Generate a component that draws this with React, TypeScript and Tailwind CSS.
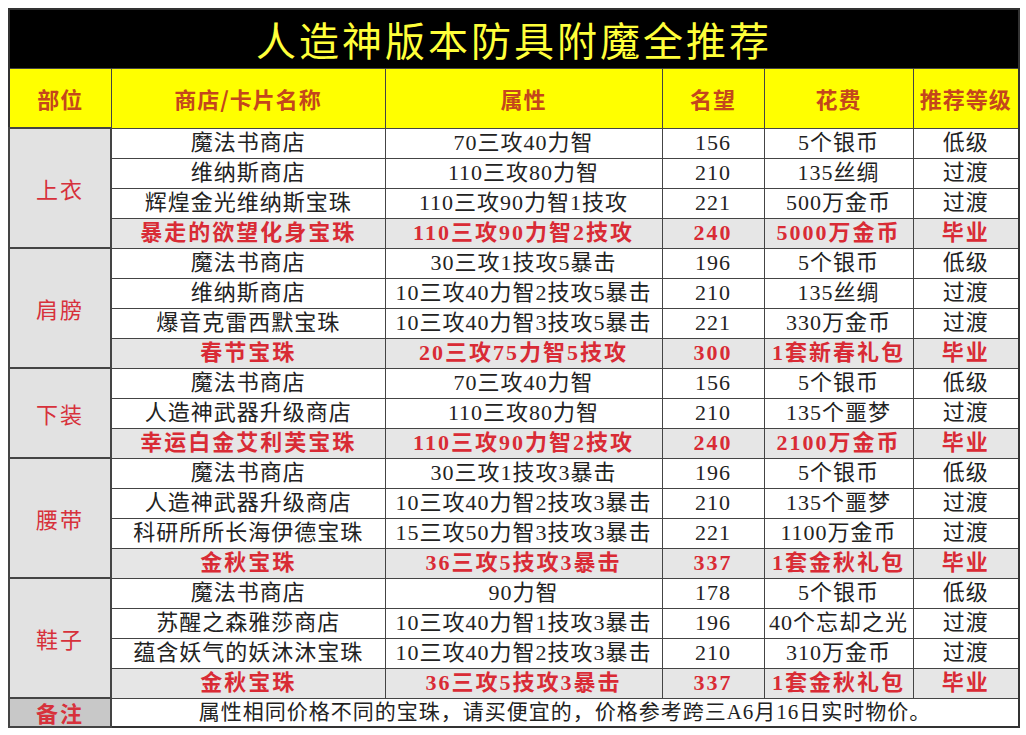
type Row = { name: string; attr: string; fame: string; cost: string; level: string; top?: boolean }

const groups: { part: string; rows: Row[] }[] = [
  {
    part: '上衣',
    rows: [
      { name: '魔法书商店', attr: '70三攻40力智', fame: '156', cost: '5个银币', level: '低级' },
      { name: '维纳斯商店', attr: '110三攻80力智', fame: '210', cost: '135丝绸', level: '过渡' },
      { name: '辉煌金光维纳斯宝珠', attr: '110三攻90力智1技攻', fame: '221', cost: '500万金币', level: '过渡' },
      { name: '暴走的欲望化身宝珠', attr: '110三攻90力智2技攻', fame: '240', cost: '5000万金币', level: '毕业', top: true },
    ],
  },
  {
    part: '肩膀',
    rows: [
      { name: '魔法书商店', attr: '30三攻1技攻5暴击', fame: '196', cost: '5个银币', level: '低级' },
      { name: '维纳斯商店', attr: '10三攻40力智2技攻5暴击', fame: '210', cost: '135丝绸', level: '过渡' },
      { name: '爆音克雷西默宝珠', attr: '10三攻40力智3技攻5暴击', fame: '221', cost: '330万金币', level: '过渡' },
      { name: '春节宝珠', attr: '20三攻75力智5技攻', fame: '300', cost: '1套新春礼包', level: '毕业', top: true },
    ],
  },
  {
    part: '下装',
    rows: [
      { name: '魔法书商店', attr: '70三攻40力智', fame: '156', cost: '5个银币', level: '低级' },
      { name: '人造神武器升级商店', attr: '110三攻80力智', fame: '210', cost: '135个噩梦', level: '过渡' },
      { name: '幸运白金艾利芙宝珠', attr: '110三攻90力智2技攻', fame: '240', cost: '2100万金币', level: '毕业', top: true },
    ],
  },
  {
    part: '腰带',
    rows: [
      { name: '魔法书商店', attr: '30三攻1技攻3暴击', fame: '196', cost: '5个银币', level: '低级' },
      { name: '人造神武器升级商店', attr: '10三攻40力智2技攻3暴击', fame: '210', cost: '135个噩梦', level: '过渡' },
      { name: '科研所所长海伊德宝珠', attr: '15三攻50力智3技攻3暴击', fame: '221', cost: '1100万金币', level: '过渡' },
      { name: '金秋宝珠', attr: '36三攻5技攻3暴击', fame: '337', cost: '1套金秋礼包', level: '毕业', top: true },
    ],
  },
  {
    part: '鞋子',
    rows: [
      { name: '魔法书商店', attr: '90力智', fame: '178', cost: '5个银币', level: '低级' },
      { name: '苏醒之森雅莎商店', attr: '10三攻40力智1技攻3暴击', fame: '196', cost: '40个忘却之光', level: '过渡' },
      { name: '蕴含妖气的妖沐沐宝珠', attr: '10三攻40力智2技攻3暴击', fame: '210', cost: '310万金币', level: '过渡' },
      { name: '金秋宝珠', attr: '36三攻5技攻3暴击', fame: '337', cost: '1套金秋礼包', level: '毕业', top: true },
    ],
  },
]

const headers = ['部位', '商店/卡片名称', '属性', '名望', '花费', '推荐等级']

export default function App() {
  return (
    <div className="w-[1026px] h-[735px] bg-white p-2 font-['Liberation_Serif','Noto_Sans_CJK_SC',serif]">
      <table className="w-[1010px] table-fixed border-collapse border-2 border-[#333]">
        <colgroup>
          <col className="w-[102px]" />
          <col className="w-[274px]" />
          <col className="w-[277px]" />
          <col className="w-[102px]" />
          <col className="w-[149px]" />
          <col className="w-[106px]" />
        </colgroup>
        <thead>
          <tr className="h-[59px] bg-black">
            <th
              colSpan={6}
              className="p-0 text-center font-['Noto_Sans_CJK_SC',sans-serif] text-[40px] font-normal tracking-[3px] text-[#ffff3a] leading-[56px]"
            >
              人造神版本防具附魔全推荐
            </th>
          </tr>
          <tr className="h-[60px] bg-[#ffff00]">
            {headers.map((h) => (
              <th
                key={h}
                className="p-0 border border-[#444] text-center text-[22px] font-bold tracking-[1px] text-[#c4461c] leading-[30px] font-['Noto_Sans_CJK_SC',sans-serif]"
              >
                {h}
              </th>
            ))}
          </tr>
        </thead>
        <tbody>
          {groups.map((g) =>
            g.rows.map((r, i) => {
              const cell = r.top
                ? 'p-0 border border-[#444] bg-[#e6e6e6] text-center text-[22px] font-bold tracking-[2px] text-[#d92b35] leading-[28px]'
                : 'p-0 border border-[#444] bg-white text-center text-[22px] tracking-[1px] text-[#222] leading-[28px]'
              return (
                <tr key={g.part + i} className="h-[30px]">
                  {i === 0 && (
                    <td
                      rowSpan={g.rows.length}
                      className="p-0 border-2 border-[#444] bg-[#e2e2e2] text-center text-[22px] tracking-[2px] text-[#d7313b] leading-[28px] font-['Noto_Sans_CJK_SC',sans-serif]"
                    >
                      {g.part}
                    </td>
                  )}
                  <td className={cell}>{r.name}</td>
                  <td className={cell}>{r.attr}</td>
                  <td className={cell}>{r.fame}</td>
                  <td className={cell}>{r.cost}</td>
                  <td className={cell}>{r.level}</td>
                </tr>
              )
            })
          )}
          <tr className="h-[29px]">
            <td className="p-0 border-2 border-[#444] bg-[#c8c8c8] text-center text-[22px] font-bold tracking-[2px] text-[#d7313b] leading-[27px] font-['Noto_Sans_CJK_SC',sans-serif]">
              备注
            </td>
            <td colSpan={5} className="p-0 border border-[#444] bg-white text-center text-[21px] tracking-[1px] text-[#222] leading-[27px]">
              属性相同价格不同的宝珠，请买便宜的，价格参考跨三A6月16日实时物价。
            </td>
          </tr>
        </tbody>
      </table>
    </div>
  )
}
